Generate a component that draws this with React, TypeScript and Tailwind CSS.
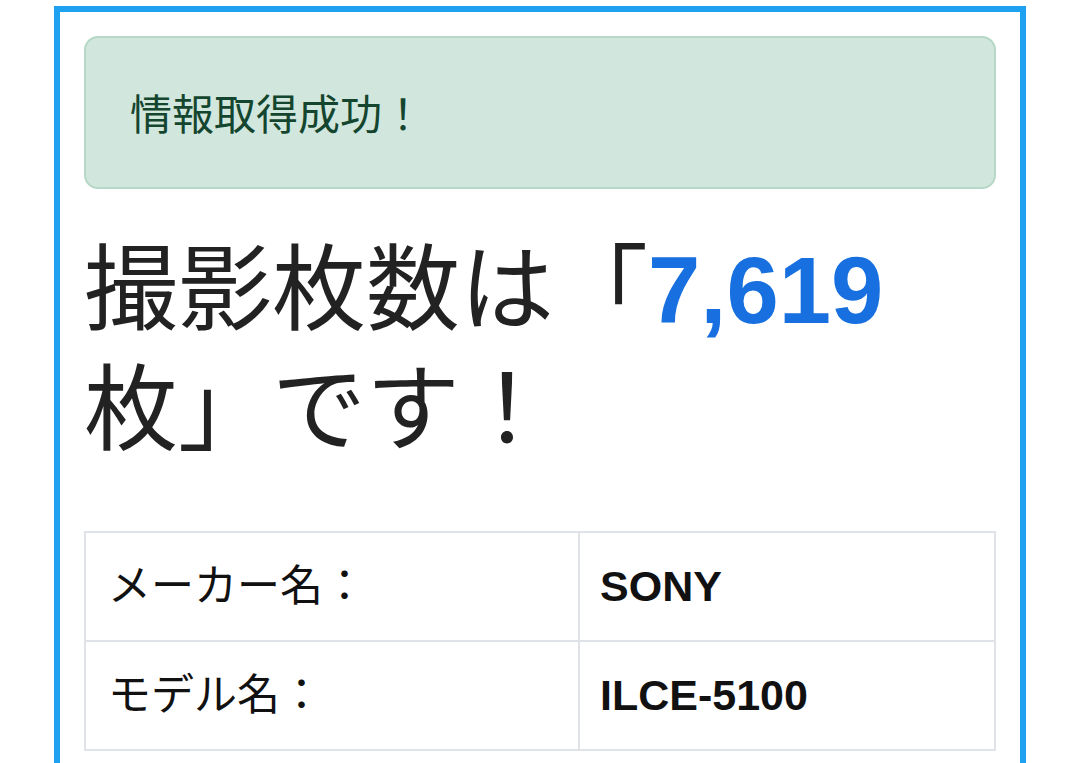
const fontStack = { fontFamily: '"Liberation Sans", "Noto Sans CJK JP", sans-serif' };

const rows = [
  { label: "メーカー名：", value: "SONY" },
  { label: "モデル名：", value: "ILCE-5100" },
];

export default function App() {
  return (
    <div className="min-h-screen overflow-hidden bg-white" style={fontStack}>
      <div className="mx-auto mt-[6px] w-[972px] border-[6px] border-[#1ea1f1] px-[24px] pt-[24px] pb-[40px]">
        <div className="flex h-[153px] items-center rounded-[14px] border-2 border-[#b7d8c8] bg-[#d1e7dd] px-[44px] pt-[6px] text-[42px] text-[#14452f]">
          情報取得成功！
        </div>

        <h1 className="mt-[42px] text-[94px] font-normal leading-[120px] text-[#222222]">
          撮影枚数は「<span className="font-bold text-[#176fe0]">7,619</span>枚」です！
        </h1>

        <table className="mt-[60px] w-full border-collapse text-[43px] text-[#111111]">
          <tbody>
            {rows.map((row) => (
              <tr key={row.label} className="h-[109px]">
                <td className="w-[494px] border-2 border-[#dfe2e7] px-[22px] align-middle">{row.label}</td>
                <td className="border-2 border-[#dfe2e7] px-[20px] align-middle font-bold">{row.value}</td>
              </tr>
            ))}
          </tbody>
        </table>
      </div>
    </div>
  );
}
